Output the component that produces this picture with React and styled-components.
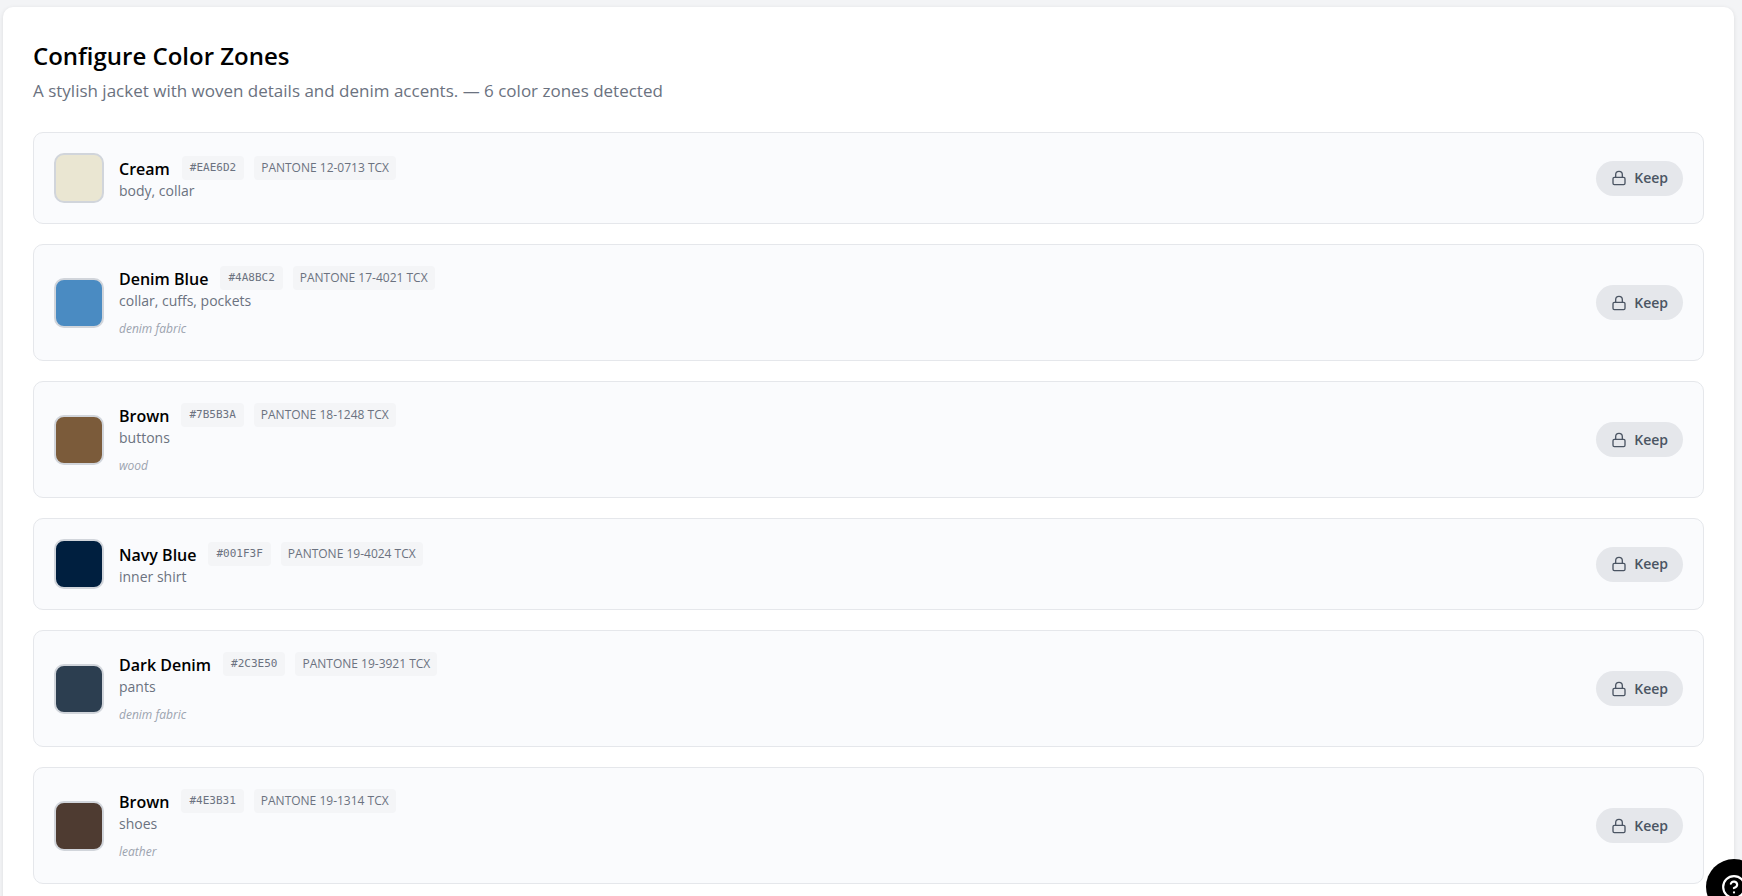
import React from "react";
import styled, { createGlobalStyle } from "styled-components";
import { Lock, CircleHelp } from "lucide-react";

const GlobalStyle = createGlobalStyle`
  *, *::before, *::after { box-sizing: border-box; }
  body {
    margin: 0;
    background: #f3f4f6;
    color: #000;
    font-family: "Segoe UI", "Open Sans", "Noto Sans", sans-serif;
  }
`;

const Page = styled.main`
  height: 100vh;
  overflow: hidden;
  padding: 7px 8px 0 3px;
`;

const Panel = styled.section`
  background: #fff;
  border-radius: 10px;
  padding: 30px;
  box-shadow: 0 1px 4px rgba(0, 0, 0, 0.1);
`;

const Title = styled.h1`
  margin: 0;
  font-size: 24px;
  line-height: 38px;
  font-weight: 600;
`;

const Subtitle = styled.p`
  margin: 2px 0 27px;
  font-size: 17px;
  line-height: 28px;
  color: #6b7280;
`;

const ZoneList = styled.ul`
  display: flex;
  flex-direction: column;
  gap: 20px;
  margin: 0;
  padding: 0;
  list-style: none;
`;

const ZoneCard = styled.li`
  display: flex;
  align-items: center;
  gap: 15px;
  padding: 20px;
  background: #fafbfd;
  border: 1px solid #e5e7eb;
  border-radius: 10px;
`;

const Swatch = styled.div`
  flex: none;
  width: 50px;
  height: 50px;
  border: 2px solid #d1d5db;
  border-radius: 10px;
  background: ${(p) => p.$color};
`;

const ZoneInfo = styled.div`
  flex: 1;
  min-width: 0;
`;

const NameRow = styled.div`
  display: flex;
  align-items: center;
  gap: 10px;
  height: 26px;
`;

const ZoneName = styled.h2`
  margin: 0;
  padding: 2px 2px 0 0;
  font-size: 16px;
  line-height: 24px;
  font-weight: 600;
`;

const Tag = styled.span`
  padding: 0 7px;
  border-radius: 4px;
  background: #f4f5f7;
  color: #6b7280;
  font-size: 12px;
  line-height: 24px;
`;

const HexTag = styled(Tag)`
  padding: 0 8px;
  font-family: Consolas, "DejaVu Sans Mono", monospace;
  font-size: 11px;
`;

const Areas = styled.p`
  margin: 0;
  font-size: 14px;
  line-height: 20px;
  color: #6b7280;
`;

const Material = styled.p`
  margin: 9px 0 2px;
  font-size: 12px;
  line-height: 18px;
  font-style: italic;
  color: #9ca3af;
`;

const KeepButton = styled.button`
  display: flex;
  align-items: center;
  gap: 7px;
  height: 35px;
  padding: 0 15px;
  border: 0;
  border-radius: 18px;
  background: #e5e7eb;
  color: #4b5563;
  font: 600 14px/20px "Segoe UI", "Open Sans", "Noto Sans", sans-serif;
  cursor: pointer;
`;

const HelpButton = styled.button`
  position: fixed;
  right: -20px;
  bottom: -19px;
  display: flex;
  align-items: center;
  justify-content: center;
  width: 56px;
  height: 56px;
  padding: 0;
  border: 0;
  border-radius: 50%;
  background: #000;
  color: #fff;
  cursor: pointer;
`;

const zones = [
  { name: "Cream", hex: "#EAE6D2", pantone: "12-0713", areas: "body, collar" },
  { name: "Denim Blue", hex: "#4A8BC2", pantone: "17-4021", areas: "collar, cuffs, pockets", material: "denim fabric" },
  { name: "Brown", hex: "#7B5B3A", pantone: "18-1248", areas: "buttons", material: "wood" },
  { name: "Navy Blue", hex: "#001F3F", pantone: "19-4024", areas: "inner shirt" },
  { name: "Dark Denim", hex: "#2C3E50", pantone: "19-3921", areas: "pants", material: "denim fabric" },
  { name: "Brown", hex: "#4E3B31", pantone: "19-1314", areas: "shoes", material: "leather" },
];

function Zone({ zone }) {
  return (
    <ZoneCard>
      <Swatch $color={zone.hex} />
      <ZoneInfo>
        <NameRow>
          <ZoneName>{zone.name}</ZoneName>
          <HexTag>{zone.hex}</HexTag>
          <Tag>PANTONE {zone.pantone} TCX</Tag>
        </NameRow>
        <Areas>{zone.areas}</Areas>
        {zone.material && <Material>{zone.material}</Material>}
      </ZoneInfo>
      <KeepButton type="button">
        <Lock size={16} aria-hidden="true" />
        Keep
      </KeepButton>
    </ZoneCard>
  );
}

export default function App() {
  return (
    <>
      <GlobalStyle />
      <Page>
        <Panel>
          <Title>Configure Color Zones</Title>
          <Subtitle>
            A stylish jacket with woven details and denim accents. — {zones.length} color zones detected
          </Subtitle>
          <ZoneList>
            {zones.map((zone) => (
              <Zone key={zone.hex} zone={zone} />
            ))}
          </ZoneList>
        </Panel>
      </Page>
      <HelpButton type="button" aria-label="Help">
        <CircleHelp size={26} aria-hidden="true" />
      </HelpButton>
    </>
  );
}
